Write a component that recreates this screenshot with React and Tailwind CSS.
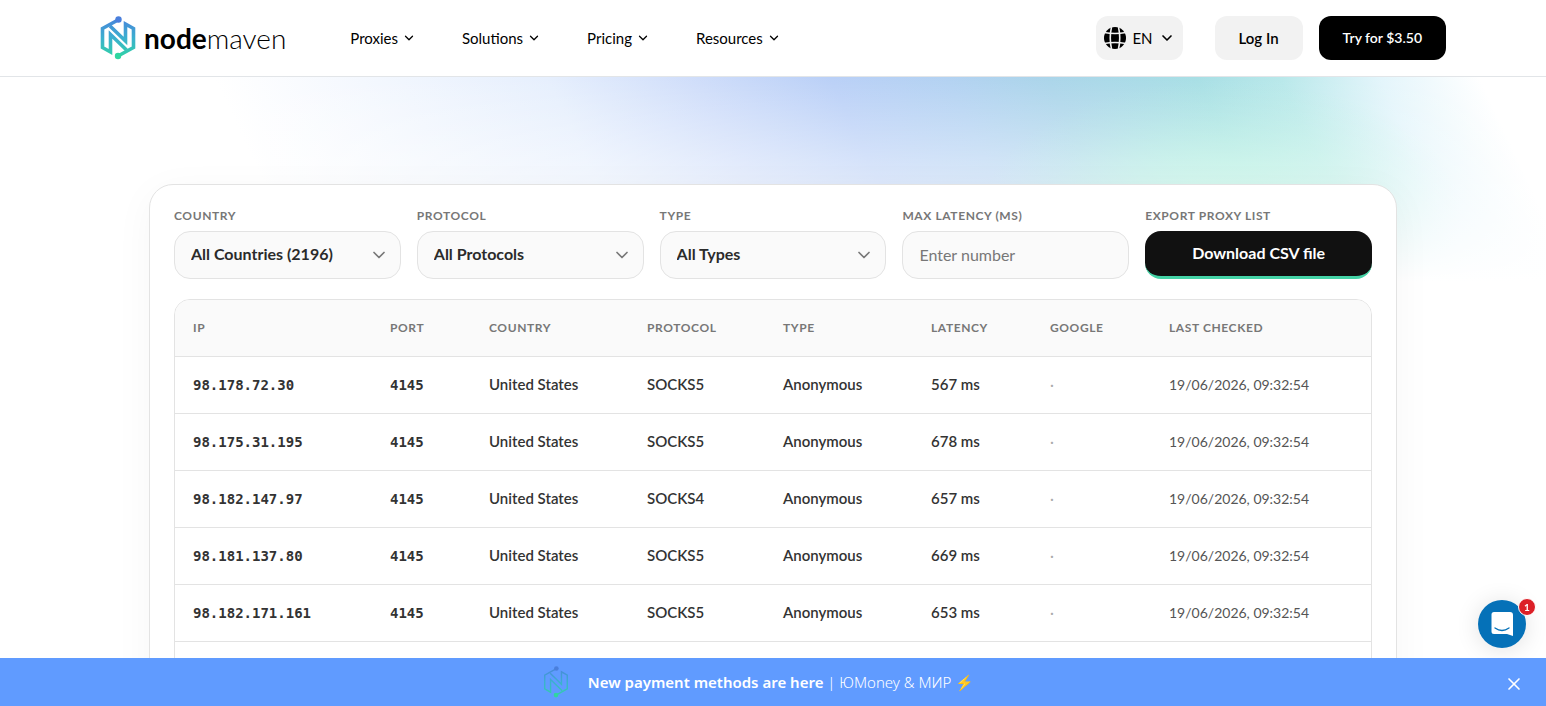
import { ChevronDown, X } from 'lucide-react';

const NAV = ['Proxies', 'Solutions', 'Pricing', 'Resources'];

const FILTERS = [
    { id: 'country', label: 'Country', value: 'All Countries (2196)' },
    { id: 'protocol', label: 'Protocol', value: 'All Protocols' },
    { id: 'type', label: 'Type', value: 'All Types' },
];

const COLUMNS = [
    { label: 'IP', width: 'w-[197px]' },
    { label: 'Port', width: 'w-[99px]' },
    { label: 'Country', width: 'w-[158px]' },
    { label: 'Protocol', width: 'w-[136px]' },
    { label: 'Type', width: 'w-[148px]' },
    { label: 'Latency', width: 'w-[119px]' },
    { label: 'Google', width: 'w-[119px]' },
    { label: 'Last checked', width: 'w-auto' },
];

const ROWS = [
    { ip: '98.178.72.30', protocol: 'SOCKS5', latency: '567 ms' },
    { ip: '98.175.31.195', protocol: 'SOCKS5', latency: '678 ms' },
    { ip: '98.182.147.97', protocol: 'SOCKS4', latency: '657 ms' },
    { ip: '98.181.137.80', protocol: 'SOCKS5', latency: '669 ms' },
    { ip: '98.182.171.161', protocol: 'SOCKS5', latency: '653 ms' },
];

function LogoMark({ id, className, strokeWidth = 3.6 }) {
    return (
        <svg viewBox="0 0 36 44" className={className} fill="none" aria-hidden="true">
            <defs>
                <linearGradient id={id} x1="0" y1="0" x2="0" y2="44" gradientUnits="userSpaceOnUse">
                    <stop offset="0" stopColor="#4a7fdc" />
                    <stop offset="0.5" stopColor="#3bb0cf" />
                    <stop offset="1" stopColor="#2fd6a0" />
                </linearGradient>
            </defs>
            <g stroke={`url(#${id})`} strokeWidth={strokeWidth}>
                <path d="M18 4 L2.500 12.500 V31.500 L10.500 36 V18.500 L26.500 34" />
                <path d="M18 40 L33.500 31.500 V12.500 L25.500 8 V25 L10 10" />
            </g>
            <circle cx="18.500" cy="3.500" r="3.200" fill="#4a7fdc" />
            <circle cx="18" cy="40" r="3.200" fill="#2fd6a0" />
        </svg>
    );
}

function GlobeIcon() {
    return (
        <svg viewBox="0 0 22 22" className="size-[22px]" fill="none" aria-hidden="true">
            <circle cx="11" cy="11" r="11" fill="#000" />
            <g stroke="#f2f2f2" strokeWidth="1.600">
                <path d="M0 5.500 Q11 7.500 22 5.500 M0 16.500 Q11 14.500 22 16.500" />
                <path d="M7.500 0 Q5 11 7.500 22 M14.500 0 Q17 11 14.500 22" />
            </g>
        </svg>
    );
}

function Header() {
    return (
        <header className="relative border-b border-[#e2e5e8] bg-white">
            <div className="mx-auto flex h-[76px] max-w-[1346px] items-center justify-between">
                <div className="flex items-center">
                    <a href="#" className="flex items-center gap-2 text-black">
                        <LogoMark id="logo-header" className="h-11 w-9" />
                        <span className="text-[28px] leading-8">
                            <span className="font-bold">node</span>
                            <span className="font-light">maven</span>
                        </span>
                    </a>
                    <nav className="ml-16 flex items-center gap-[46px]">
                        {NAV.map((item) => (
                            <button key={item} type="button" className="flex items-center gap-1 text-[15px] text-black">
                                {item}
                                <ChevronDown className="size-3.5" strokeWidth={2.2} />
                            </button>
                        ))}
                    </nav>
                </div>

                <div className="flex items-center">
                    <button type="button" className="flex h-11 items-center gap-1.5 rounded-xl bg-[#f2f2f2] px-2 text-[15px] text-black">
                        <GlobeIcon />
                        EN
                        <ChevronDown className="size-4" strokeWidth={2.5} />
                    </button>
                    <a href="#" className="ml-8 flex h-11 items-center rounded-xl bg-[#f2f2f2] px-6 text-[15px] font-semibold text-black">
                        Log In
                    </a>
                    <a href="#" className="ml-4 flex h-11 items-center rounded-xl bg-black px-6 text-sm font-semibold text-white">
                        Try for $3.50
                    </a>
                </div>
            </div>
        </header>
    );
}

const LABEL = 'text-xs leading-[14px] font-bold tracking-wider text-[#777] uppercase';
const FIELD = 'h-12 w-full rounded-2xl border border-[#e3e3e3] bg-[#fafafa] px-4 pb-0.5 text-base';

function Filters() {
    return (
        <div className="grid grid-cols-5 gap-4">
            {FILTERS.map(({ id, label, value }) => (
                <div key={id} className="flex flex-col gap-2">
                    <label htmlFor={id} className={LABEL}>{label}</label>
                    <div className="relative">
                        <select id={id} className={`${FIELD} appearance-none font-bold text-[#2b2b2b]`}>
                            <option>{value}</option>
                        </select>
                        <ChevronDown className="pointer-events-none absolute top-3.5 right-3 size-5 text-[#777]" />
                    </div>
                </div>
            ))}
            <div className="flex flex-col gap-2">
                <label htmlFor="latency" className={LABEL}>Max latency (ms)</label>
                <input id="latency" type="text" placeholder="Enter number" className={`${FIELD} placeholder:text-[#777]`} />
            </div>
            <div className="flex flex-col gap-2">
                <label htmlFor="export" className={LABEL}>Export proxy list</label>
                <button id="export" type="button" className="h-12 rounded-2xl border-b-3 border-[#44d3a6] bg-[#111] pb-0.5 text-base font-bold text-white">
                    Download CSV file
                </button>
            </div>
        </div>
    );
}

function ProxyTable() {
    return (
        <div className="mt-5 overflow-hidden rounded-2xl border border-[#e3e3e3]">
            <table className="w-full table-fixed text-left text-[15px]">
                <thead className="bg-[#fafafa]">
                    <tr>
                        {COLUMNS.map(({ label, width }) => (
                            <th key={label} className={`${width} h-14 px-[18px] ${LABEL}`}>{label}</th>
                        ))}
                    </tr>
                </thead>
                <tbody className="font-semibold text-[#333]">
                    {ROWS.map(({ ip, protocol, latency }) => (
                        <tr key={ip} className="h-[57px] border-t border-[#e3e3e3] *:px-[18px]">
                            <td className="font-['DejaVu_Sans_Mono',monospace] text-sm font-bold">{ip}</td>
                            <td className="font-['DejaVu_Sans_Mono',monospace] text-sm font-bold">4145</td>
                            <td>United States</td>
                            <td>{protocol}</td>
                            <td>Anonymous</td>
                            <td>{latency}</td>
                            <td className="font-normal text-[#aaa]">·</td>
                            <td className="text-sm font-normal text-[#555]">19/06/2026, 09:32:54</td>
                        </tr>
                    ))}
                    <tr className="h-[57px] border-t border-[#e3e3e3]">
                        <td colSpan={8} />
                    </tr>
                </tbody>
            </table>
        </div>
    );
}

function ChatButton() {
    return (
        <button type="button" aria-label="Open chat" className="fixed right-5 bottom-[58px] size-12 rounded-full bg-[#0571b8] shadow-[0_2px_24px_rgba(0,0,0,0.12)]">
            <svg viewBox="0 0 48 48" className="size-12" fill="none" aria-hidden="true">
                <path d="M16 12 H32 Q35 12 35 15 V36 L29 34 H16 Q13.500 34 13.500 31.500 V14.500 Q13.500 12 16 12 Z" fill="#fff" />
                <path d="M17 28 Q24 33 31 28" stroke="#0571b8" strokeWidth="1.300" strokeLinecap="round" />
            </svg>
            <span className="absolute -top-0.5 -right-[10px] flex size-[18px] items-center justify-center rounded-full border border-white bg-[#dc2027] text-[10px] font-bold text-white">
                1
            </span>
        </button>
    );
}

function Banner() {
    return (
        <div className="fixed inset-x-0 bottom-0 flex h-12 items-center justify-center bg-[#609bff] text-white">
            <a href="#" className="mr-8 flex items-center gap-4 font-['Noto_Sans',sans-serif] text-[15px]">
                <LogoMark id="logo-banner" className="h-8 w-8" strokeWidth={2} />
                <span className="font-light">
                    <span className="font-semibold">New payment methods are here</span> | ЮMoney &amp; МИР ⚡
                </span>
            </a>
            <button type="button" aria-label="Close" className="absolute top-4 right-[22px]">
                <X className="size-5" />
            </button>
        </div>
    );
}

// Soft blue-to-mint glow under the header
function Backdrop() {
    return (
        <div className="absolute inset-x-0 top-0 h-64 bg-[linear-gradient(to_bottom,#ffffff00_0%,#ffffff80_42%,#ffffff_80%),radial-gradient(ellipse_240px_130px_at_79%_52%,#aaf2da_0%,#aaf2daa0_40%,#aaf2da30_75%,#aaf2da00_100%),linear-gradient(65deg,#ffffff_20%,#e6effd_40%,#cfddfa_49%,#bad0f7_57%,#b3d2f2_64%,#abd5ea_70%,#a8dfe5_79%,#b8e8ea_84%,#e3f5fb_90%,#ffffff_96%)]" />
    );
}

export default function App() {
    return (
        <div className="h-screen overflow-hidden bg-white font-['Lato','Liberation_Sans',sans-serif]">
            <Header />
            <main className="relative px-6 pt-[107px]">
                <Backdrop />
                <div className="relative mx-auto max-w-[1248px] rounded-3xl border border-[#e3e3e3] bg-white p-6 shadow-[0_8px_40px_rgba(0,0,0,0.04)]">
                    <Filters />
                    <ProxyTable />
                </div>
            </main>
            <ChatButton />
            <Banner />
        </div>
    );
}
